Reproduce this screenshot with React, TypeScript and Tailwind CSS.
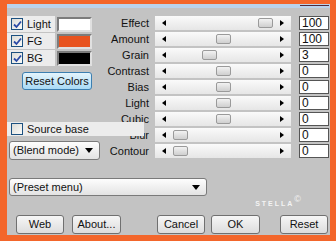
import React from 'react'

const font = { fontFamily: '"Liberation Sans", Arial, sans-serif' }

type Row = { label: string; value: string; thumb: number }

const rows: Row[] = [
  { label: 'Effect', value: '100', thumb: 103 },
  { label: 'Amount', value: '100', thumb: 61 },
  { label: 'Grain', value: '3', thumb: 47 },
  { label: 'Contrast', value: '0', thumb: 61 },
  { label: 'Bias', value: '0', thumb: 61 },
  { label: 'Light', value: '0', thumb: 61 },
  { label: 'Cubic', value: '0', thumb: 61 },
  { label: 'Blur', value: '0', thumb: 18 },
  { label: 'Contour', value: '0', thumb: 18 },
]

function Check({ on }: { on: boolean }) {
  return (
    <div className="flex h-[12px] w-[12px] shrink-0 items-center justify-center border border-[#1c5180] bg-gradient-to-br from-[#dcdcd7] to-[#fbfbf9]">
      {on && (
        <svg width="9" height="9" viewBox="0 0 9 9">
          <path d="M1 4.5 L3.5 7 L8 1.5" fill="none" stroke="#2b4aa6" strokeWidth="1.8" />
        </svg>
      )}
    </div>
  )
}

function ColorRow({ label, color }: { label: string; color: string }) {
  return (
    <div className="flex h-[16px] items-center">
      <div className="flex h-full w-[48px] items-center gap-[4px] bg-[#ececec] pl-[4px]">
        <Check on />
        <span>{label}</span>
      </div>
      <div
        className="ml-[2px] h-[15px] w-[35px] border-2 border-t-[#7c7c7c] border-l-[#7c7c7c] border-r-[#e0e0e0] border-b-[#e0e0e0]"
        style={{ background: color }}
      />
    </div>
  )
}

function Triangle() {
  return (
    <svg width="8" height="5" viewBox="0 0 8 5">
      <path d="M0 0 H8 L4 5 Z" fill="#000" />
    </svg>
  )
}

function Dropdown({ text, width }: { text: string; width: string }) {
  return (
    <div
      className={`ml-[2px] flex items-center justify-between rounded-[3px] border border-[#7a7a7a] bg-gradient-to-b from-[#fdfdfd] to-[#e3e3e3] pl-[3px] pr-[6px] ${width}`}
    >
      <span>{text}</span>
      <Triangle />
    </div>
  )
}

function Btn({ children, className }: { children: React.ReactNode; className: string }) {
  return (
    <div
      className={`flex h-[19px] w-[48px] items-center justify-center rounded-[3px] border border-[#707070] bg-gradient-to-b from-[#f6f6f6] to-[#dddddd] ${className}`}
    >
      {children}
    </div>
  )
}

function SliderRow({ r }: { r: Row }) {
  return (
    <div className="flex h-[14px] items-center">
      <span className="w-[49px] text-right">{r.label}</span>
      <div className="relative ml-[6px] flex h-[14px] w-[136px] items-center justify-between bg-gradient-to-b from-[#fafafa] to-[#e6e6e6] px-[7px]">
        <svg width="4" height="6" viewBox="0 0 4 6">
          <path d="M4 0 V6 L0 3 Z" fill="#000" />
        </svg>
        <svg width="4" height="6" viewBox="0 0 4 6">
          <path d="M0 0 V6 L4 3 Z" fill="#000" />
        </svg>
        <div
          className="absolute top-[2px] h-[10px] w-[15px] rounded-[2px] border border-[#9a9a9a] bg-gradient-to-b from-[#f2f2f2] to-[#cfcfcf]"
          style={{ left: r.thumb }}
        />
      </div>
      <div className="ml-[8px] flex h-[14px] w-[30px] items-center border border-[#555] bg-white pl-[2px] text-[12px] leading-none">
        {r.value}
      </div>
    </div>
  )
}

export default function App() {
  return (
    <div className="h-[241px] w-[336px] bg-[#f3662b] pb-[6px] pl-[7px] pr-[6px] pt-[4px] text-[11px] leading-none text-[#111]" style={font}>
      <div className="flex h-full flex-col bg-[#c3c3c3]">
        {/* title strip */}
        <div className="flex h-[4px] justify-end bg-[#bad3ec]">
          <div className="mr-[1px] mt-[1px] h-px w-[29px] bg-[#4f2a3c]" />
        </div>

        <div className="mt-[8px] flex">
          {/* left column */}
          <div className="flex w-[93px] flex-col">
            <div className="flex flex-col gap-[1px]">
              <ColorRow label="Light" color="#ffffff" />
              <ColorRow label="FG" color="#e8531f" />
              <ColorRow label="BG" color="#000000" />
            </div>
            <div className="ml-[15px] mt-[6px] flex h-[18px] w-[70px] items-center justify-center rounded-[3px] border border-[#3c7fb1] bg-gradient-to-b from-[#e4f4fc] to-[#a9daf5]">
              Reset Colors
            </div>
            <div className="relative z-10 mt-[32px] flex h-[14px] w-[137px] shrink-0 items-center gap-[4px] bg-[#ececec] pl-[4px]">
              <Check on={false} />
              <span>Source base</span>
            </div>
            <div className="mt-[5px] flex h-[19px]">
              <Dropdown text="(Blend mode)" width="w-[92px]" />
            </div>
          </div>

          {/* sliders */}
          <div className="flex flex-col gap-[2px]">
            {rows.map((r) => (
              <SliderRow key={r.label} r={r} />
            ))}
          </div>
        </div>

        <div className="mt-[18px] flex h-[18px]">
          <Dropdown text="(Preset menu)" width="w-[198px]" />
        </div>

        <div className="flex h-[19px] items-end justify-end pb-[8px] pr-[29px]">
          <span className="text-[7px] font-bold tracking-[2px] text-[#f4f4f4]">STELLA</span>
          <span className="mb-[3px] text-[9px] text-[#f4f4f4]">©</span>
        </div>

        <div className="flex">
          <Btn className="ml-[9px]">Web</Btn>
          <Btn className="ml-[8px] w-[49px]">About...</Btn>
          <Btn className="ml-[36px]">Cancel</Btn>
          <Btn className="ml-[6px] w-[49px]">OK</Btn>
          <Btn className="ml-[20px]">Reset</Btn>
        </div>
      </div>
    </div>
  )
}
